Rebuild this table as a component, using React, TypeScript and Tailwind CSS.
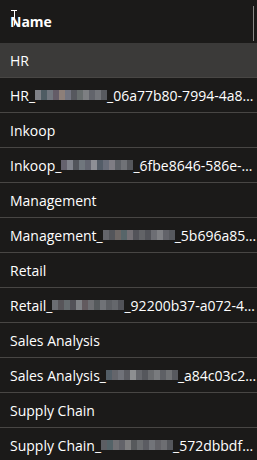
import React from 'react';

type Row = { name: string; blur?: string[]; tail?: string };

const rows: Row[] = [
  { name: 'HR' },
  {
    name: 'HR_',
    blur: ['bg-[#8a8d93]', 'bg-[#55646c]', 'bg-[#7b8189]', 'bg-[#6d6470]', 'bg-[#9a8a84]', 'bg-[#7c7e8c]', 'bg-[#5d5f66]', 'bg-[#707677]', 'bg-[#888a8e]', 'bg-[#6a6d74]', 'bg-[#7d7f85]', 'bg-[#5f6167]'],
    tail: '_06a77b80-7994-4a8…',
  },
  { name: 'Inkoop' },
  {
    name: 'Inkoop_',
    blur: ['bg-[#6e6a78]', 'bg-[#8d8f99]', 'bg-[#585b63]', 'bg-[#7a8088]', 'bg-[#6b6e7a]', 'bg-[#9a9ca4]', 'bg-[#5a6470]', 'bg-[#727684]', 'bg-[#8a8890]', 'bg-[#65686f]', 'bg-[#7a7c82]', 'bg-[#5c5e64]'],
    tail: '_6fbe8646-586e-…',
  },
  { name: 'Management' },
  {
    name: 'Management_',
    blur: ['bg-[#6c6e74]', 'bg-[#5a5c62]', 'bg-[#76706e]', 'bg-[#5e6e72]', 'bg-[#7e7a80]', 'bg-[#5a5a60]', 'bg-[#6a6c70]', 'bg-[#585a60]', 'bg-[#76787e]', 'bg-[#8a8c90]', 'bg-[#6a6c72]', 'bg-[#5e6066]'],
    tail: '_5b696a85…',
  },
  { name: 'Retail' },
  {
    name: 'Retail_',
    blur: ['bg-[#74767c]', 'bg-[#5e5c60]', 'bg-[#6e7478]', 'bg-[#58585e]', 'bg-[#8c8e92]', 'bg-[#6a6266]', 'bg-[#76787c]', 'bg-[#5c6064]', 'bg-[#7a7c82]', 'bg-[#64666c]', 'bg-[#6e7076]', 'bg-[#585a60]'],
    tail: '_92200b37-a072-4…',
  },
  { name: 'Sales Analysis' },
  {
    name: 'Sales Analysis_',
    blur: ['bg-[#5a6670]', 'bg-[#6c6e74]', 'bg-[#7a7c84]', 'bg-[#62646a]', 'bg-[#9a9c9e]', 'bg-[#6e7076]', 'bg-[#5c5e64]', 'bg-[#727478]', 'bg-[#84868a]', 'bg-[#66686e]', 'bg-[#7a7c80]', 'bg-[#5e6066]'],
    tail: '_a84c03c2…',
  },
  { name: 'Supply Chain' },
  {
    name: 'Supply Chain_',
    blur: ['bg-[#64666c]', 'bg-[#5a6a70]', 'bg-[#7a7a7e]', 'bg-[#6a6c72]', 'bg-[#8a8a8c]', 'bg-[#5e6064]', 'bg-[#74767a]', 'bg-[#62646a]', 'bg-[#7c7e84]', 'bg-[#6a6a70]', 'bg-[#76787c]', 'bg-[#5c5e64]'],
    tail: '_572dbbdf…',
  },
];

const Blur = ({ colors }: { colors: string[] }) => (
  <span className="inline-flex h-[10px] w-[72px] shrink-0 opacity-90">
    {colors.map((c, i) => (
      <span key={i} className={`${c} h-full flex-1`} />
    ))}
  </span>
);

export default function App() {
  return (
    <div className="w-[257px] h-[460px] overflow-hidden bg-[#1b1a19] text-[14px] text-white font-['Segoe_UI','Open_Sans',sans-serif]">
      <div className="relative flex h-[43px] items-center pl-[10px] font-bold">
        Name
        <div className="absolute right-[3px] top-[6px] h-[35px] w-px bg-[#8a8886]" />
        <svg className="absolute left-[10px] top-[10px]" width="8" height="16" viewBox="0 0 8 16">
          <path d="M1 0.5h6M4.5 0.5v15" stroke="#fff" strokeWidth="1" fill="none" />
        </svg>
      </div>
      {rows.map((r, i) => (
        <div
          key={i}
          className={`flex h-[35px] items-center overflow-hidden whitespace-nowrap border-b border-[#484644] pl-[10px] ${i === 0 ? 'bg-[#3b3a39]' : ''}`}
        >
          <span>{r.name}</span>
          {r.blur && <Blur colors={r.blur} />}
          {r.tail && <span>{r.tail}</span>}
        </div>
      ))}
    </div>
  );
}
